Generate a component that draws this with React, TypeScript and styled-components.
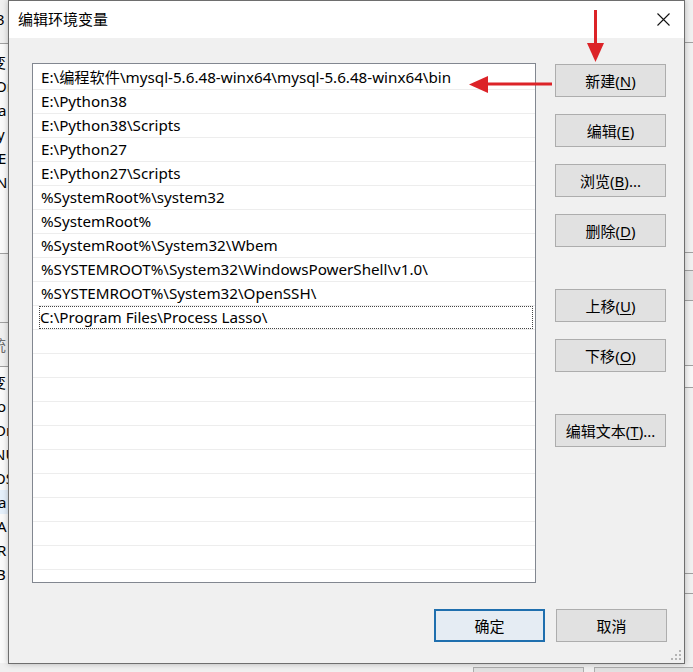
import React from "react";
import styled, { createGlobalStyle } from "styled-components";

const Global = createGlobalStyle`
  html, body { margin: 0; padding: 0; background: #f0f0f0; }
  body { font-family: "Noto Sans", "Noto Sans CJK SC", sans-serif; overflow: hidden; }
  * { box-sizing: border-box; }
`;

const Desktop = styled.div`
  position: relative;
  width: 693px;
  height: 672px;
  overflow: hidden;
  background: #f0f0f0;
  display: grid;
  grid-template-columns: 8px 1fr 9px;
  grid-template-rows: 663px 9px;
  font-size: 15px;
  color: #000;
`;

/* ---------- window behind the dialog ---------- */
const BackStrip = styled.div`
  display: flex;
  flex-direction: column;
  overflow: hidden;
  line-height: 24px;
  white-space: nowrap;
`;

const BackZone = styled.div<{ $h: number; $bg?: string; $lines?: boolean; $pad?: number }>`
  flex: none;
  height: ${(p) => p.$h}px;
  background: ${(p) => p.$bg ?? "#f0f0f0"};
  border-top: ${(p) => (p.$lines ? "1px solid #a0a0a0" : "none")};
  padding-top: ${(p) => p.$pad ?? 0}px;
  overflow: hidden;
`;

const BackText = styled.div<{ $shift: number; $sel?: boolean; $fade?: boolean }>`
  height: 24px;
  text-indent: ${(p) => p.$shift}px;
  color: ${(p) => (p.$fade ? "#6d6d6d" : "#000")};
  background: ${(p) => (p.$sel ? "#e5f0fb" : "transparent")};
`;

const BackBottom = styled.div`
  grid-column: 1 / 4;
  display: flex;
  gap: 10px;
  padding: 4px 0 0 473px;
  overflow: hidden;
`;

const BackButton = styled.div`
  flex: none;
  width: 111px;
  height: 20px;
  background: #e1e1e1;
  border: 1px solid #adadad;
`;

/* ---------- dialog ---------- */
const Dialog = styled.div`
  position: absolute;
  left: 8px;
  top: 0;
  width: 677px;
  height: 664px;
  background: #f0f0f0;
  border: 1px solid #6e6e6e;
  box-shadow: 0 0 6px rgba(0, 0, 0, 0.25);
  display: flex;
  flex-direction: column;
`;

const TitleBar = styled.div`
  flex: none;
  height: 37px;
  background: #fff;
  display: flex;
  align-items: center;
  justify-content: space-between;
  padding-left: 9px;
  padding-right: 14px;
`;

const Title = styled.span`
  font-size: 15px;
  line-height: 20px;
  margin-top: -1px;
`;

const Body = styled.div`
  flex: 1;
  display: flex;
  flex-direction: column;
  padding: 25px 17px 21px 23px;
`;

const Main = styled.div`
  display: flex;
  gap: 19px;
`;

const ListBox = styled.div`
  flex: none;
  width: 504px;
  height: 520px;
  background: #fff;
  border: 1px solid #828790;
  padding-top: 2px;
  overflow: hidden;
`;

const Row = styled.div<{ $focus?: boolean }>`
  height: 24px;
  border-bottom: 1px solid #ededed;
  padding: ${(p) => (p.$focus ? "0 2px 0 6px" : "0 0 0 8px")};
  line-height: 23px;
  white-space: nowrap;
  font-size: 15.2px;
`;

const FocusBox = styled.div`
  height: 23px;
  border: 1px dotted #444;
  line-height: 21px;
  padding-left: 0;
`;

const ButtonColumn = styled.div`
  flex: none;
  width: 111px;
  margin-top: 1px;
  display: flex;
  flex-direction: column;
  gap: 42px;
`;

const ButtonGroup = styled.div`
  display: flex;
  flex-direction: column;
  gap: 17px;
`;

const Button = styled.button<{ $default?: boolean }>`
  width: 111px;
  height: 33px;
  padding: 0;
  margin: 0;
  font-family: inherit;
  font-size: 15px;
  line-height: 20px;
  color: #000;
  background: ${(p) => (p.$default ? "#e5ecf3" : "#e1e1e1")};
  border: ${(p) => (p.$default ? "2px solid #1f6fae" : "1px solid #adadad")};
  u { text-decoration: underline; text-underline-offset: 2px; }
`;

const Footer = styled.div`
  margin-top: 26px;
  display: flex;
  justify-content: flex-end;
  gap: 11px;
`;

const Grip = styled.svg`
  position: absolute;
  right: 2px;
  bottom: 2px;
`;

const Arrows = styled.svg`
  position: absolute;
  left: 0;
  top: 0;
  pointer-events: none;
`;

const paths = [
  "E:\\编程软件\\mysql-5.6.48-winx64\\mysql-5.6.48-winx64\\bin",
  "E:\\Python38",
  "E:\\Python38\\Scripts",
  "E:\\Python27",
  "E:\\Python27\\Scripts",
  "%SystemRoot%\\system32",
  "%SystemRoot%",
  "%SystemRoot%\\System32\\Wbem",
  "%SYSTEMROOT%\\System32\\WindowsPowerShell\\v1.0\\",
  "%SYSTEMROOT%\\System32\\OpenSSH\\",
  "C:\\Program Files\\Process Lasso\\",
];

const Key = ({ label, k, tail = "" }: { label: string; k: string; tail?: string }) => (
  <>
    {label}(<u>{k}</u>){tail}
  </>
);

export default function App() {
  const rows = [...paths, ...Array(12).fill("")];
  return (
    <>
      <Global />
      <Desktop>
        <BackStrip>
          <BackZone $h={43} $pad={7}>
            <BackText $shift={-4}>3</BackText>
          </BackZone>
          <BackZone $h={210} $bg="#fafafa" $lines $pad={6}>
            <BackText $shift={-9}>变</BackText>
            <BackText $shift={-5}>Or</BackText>
            <BackText $shift={-2}>a</BackText>
            <BackText $shift={-3}>y</BackText>
            <BackText $shift={-2}>E</BackText>
            <BackText $shift={-4}>N</BackText>
          </BackZone>
          <BackZone $h={69} $lines />
          <BackZone $h={44} $lines $pad={10}>
            <BackText $shift={-9} $fade>统</BackText>
          </BackZone>
          <BackZone $h={297} $bg="#fafafa" $lines $pad={3}>
            <BackText $shift={-9}>变</BackText>
            <BackText $shift={-3}>o</BackText>
            <BackText $shift={-5}>Dr</BackText>
            <BackText $shift={-6}>NU</BackText>
            <BackText $shift={-6}>OS</BackText>
            <BackText $shift={-2} $sel>a</BackText>
            <BackText $shift={-3}>A</BackText>
            <BackText $shift={-3}>R</BackText>
            <BackText $shift={-4}>B</BackText>
          </BackZone>
        </BackStrip>
        <div />
        <BackStrip>
          <BackZone $h={42} />
          <BackZone $h={210} $lines />
          <BackZone $h={18} $lines />
          <BackZone $h={30} $lines $bg="#e3e3e3" />
          <BackZone $h={65} $lines />
          <BackZone $h={22} $lines $bg="#f7f7f7" />
          <BackZone $h={186} $lines />
          <BackZone $h={20} $lines />
          <BackZone $h={70} $lines />
        </BackStrip>
        <BackBottom>
          <BackButton />
          <BackButton />
        </BackBottom>

        <Dialog>
          <TitleBar>
            <Title>编辑环境变量</Title>
            <svg width="13" height="13" viewBox="0 0 13 13">
              <path d="M0.5 0.5 L12.5 12.5 M12.5 0.5 L0.5 12.5" stroke="#111" strokeWidth="1.1" fill="none" />
            </svg>
          </TitleBar>
          <Body>
            <Main>
              <ListBox>
                {rows.map((r, i) =>
                  i === paths.length - 1 ? (
                    <Row key={i} $focus>
                      <FocusBox>{r}</FocusBox>
                    </Row>
                  ) : (
                    <Row key={i}>{r}</Row>
                  )
                )}
              </ListBox>
              <ButtonColumn>
                <ButtonGroup>
                  <Button><Key label="新建" k="N" /></Button>
                  <Button><Key label="编辑" k="E" /></Button>
                  <Button><Key label="浏览" k="B" tail="..." /></Button>
                  <Button><Key label="删除" k="D" /></Button>
                </ButtonGroup>
                <ButtonGroup>
                  <Button><Key label="上移" k="U" /></Button>
                  <Button><Key label="下移" k="O" /></Button>
                </ButtonGroup>
                <ButtonGroup>
                  <Button><Key label="编辑文本" k="T" tail="..." /></Button>
                </ButtonGroup>
              </ButtonColumn>
            </Main>
            <Footer>
              <Button $default>确定</Button>
              <Button>取消</Button>
            </Footer>
          </Body>
          <Grip width="11" height="11" viewBox="0 0 11 11">
            {[
              [8, 0], [8, 4], [8, 8], [4, 4], [4, 8], [0, 8],
            ].map(([x, y], i) => (
              <rect key={i} x={x} y={y} width="2" height="2" fill="#b4b4b4" />
            ))}
          </Grip>
        </Dialog>

        <Arrows width="693" height="120" viewBox="0 0 693 120">
          <rect x="594" y="10" width="3" height="34" fill="#dc2328" />
          <polygon points="587,43 604,43 595.5,62" fill="#dc2328" />
          <rect x="486" y="82.5" width="66" height="3" fill="#dc2328" />
          <polygon points="488,76 488,93 469,84.5" fill="#dc2328" />
        </Arrows>
      </Desktop>
    </>
  );
}
